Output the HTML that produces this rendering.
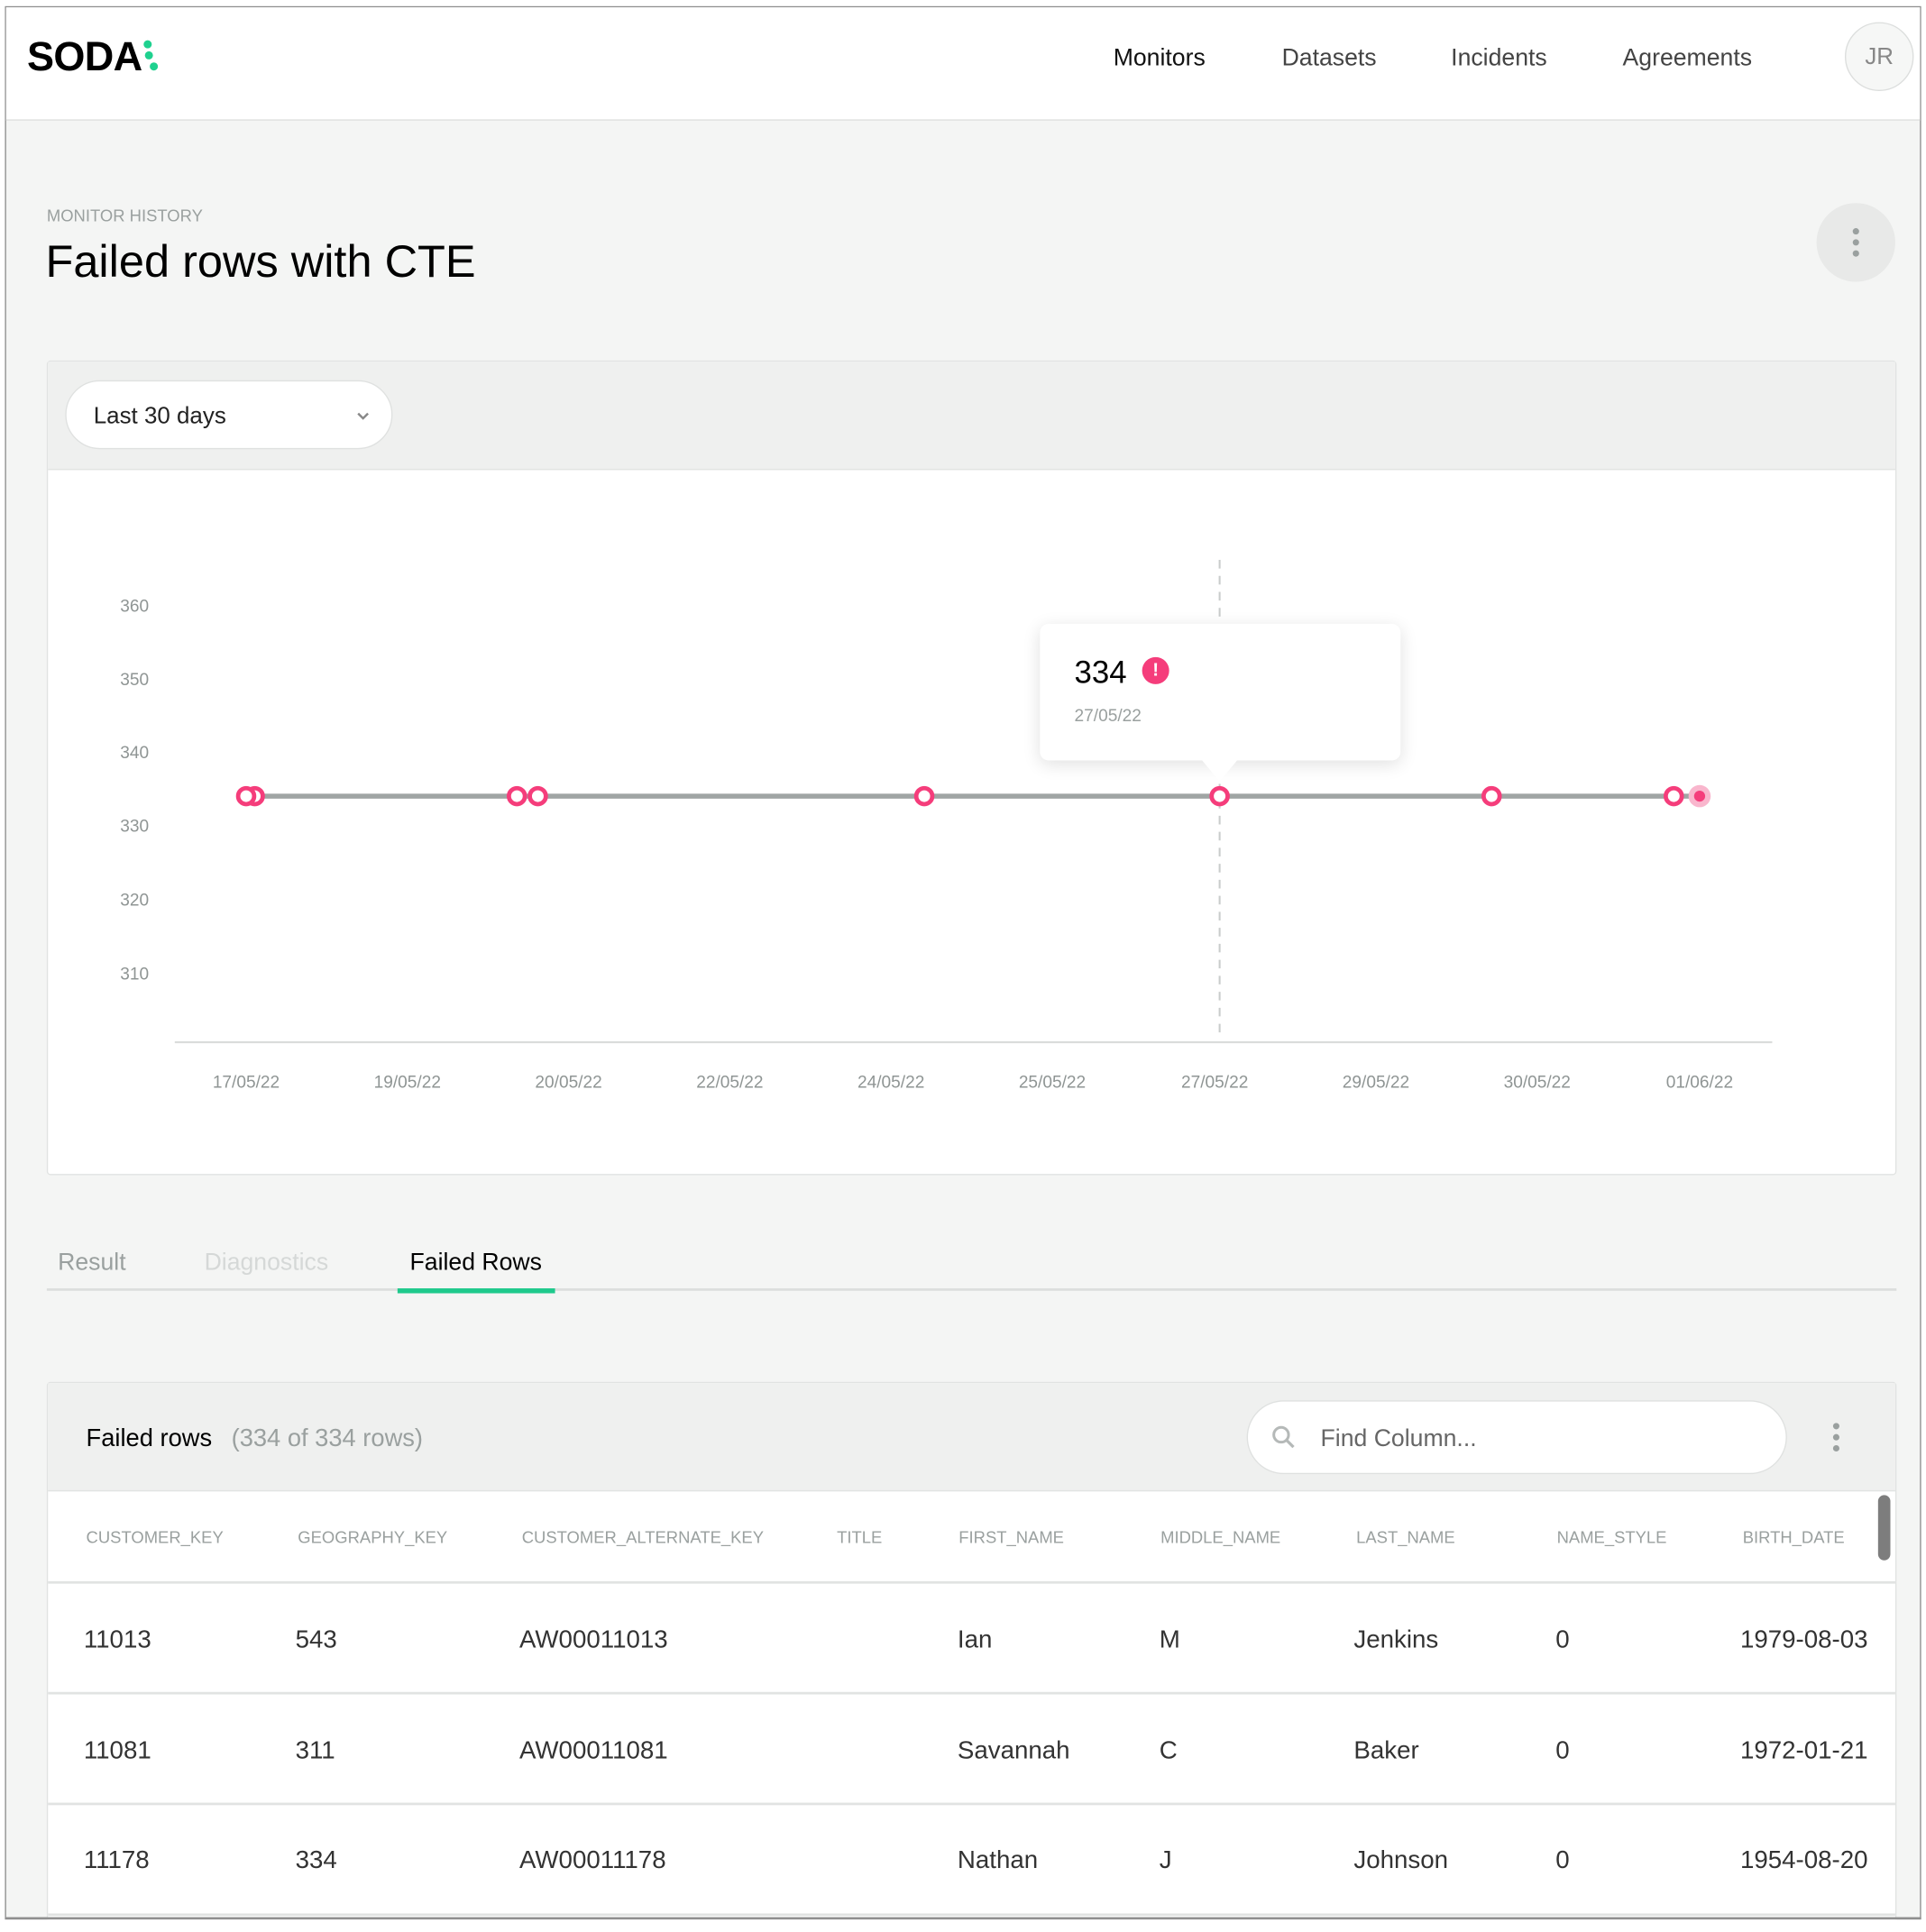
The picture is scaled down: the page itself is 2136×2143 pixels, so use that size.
<!DOCTYPE html>
<html><head><meta charset="utf-8"><style>
*{margin:0;padding:0;box-sizing:border-box}
html,body{width:2136px;height:2134px;overflow:hidden;background:#fff;font-family:"Liberation Sans",Arial,sans-serif}
#w{position:absolute;left:0;top:0;width:1565px;height:1564px;transform:scale(1.3649);transform-origin:0 0}
.a{position:absolute;white-space:nowrap}
.t{position:absolute;white-space:nowrap;line-height:20px;transform:translateY(calc(-50% + 2px))}
.c{transform:translate(-50%,calc(-50% + 2px))}
</style></head><body><div id="w">
<div class="a" style="left:4px;top:5px;width:1557px;height:1555px;border:1px solid #8f8f8f;background:#f4f5f4;overflow:hidden">
</div>
<!-- header -->
<div class="a" style="left:5px;top:6px;width:1555px;height:92px;background:#fff;border-bottom:1.5px solid #dcdedd"></div>
<div class="t" style="left:22px;top:44px;font-size:33px;font-weight:900;letter-spacing:-0.5px;line-height:34px;color:#000">SODA</div>
<svg class="a" style="left:112px;top:30px" width="22" height="30"><circle cx="8" cy="6" r="3.3" fill="#1fd18f"/><circle cx="9" cy="15" r="3.3" fill="#1fd18f"/><circle cx="13" cy="24" r="3.3" fill="#1fd18f"/></svg>
<div class="t c" style="left:942px;top:45px;font-size:19.5px;color:#111">Monitors</div>
<div class="t c" style="left:1080px;top:45px;font-size:19.5px;color:#444">Datasets</div>
<div class="t c" style="left:1218px;top:45px;font-size:19.5px;color:#444">Incidents</div>
<div class="t c" style="left:1371px;top:45px;font-size:19.5px;color:#444">Agreements</div>
<div class="a" style="left:1499px;top:18px;width:56px;height:56px;border-radius:50%;border:1.5px solid #dcdedd;background:#f6f7f6"></div>
<div class="t c" style="left:1527px;top:45px;font-size:19px;color:#888">JR</div>
<!-- title -->
<div class="t" style="left:38px;top:174px;font-size:13.5px;color:#9aa09f">MONITOR HISTORY</div>
<div class="t" style="left:37px;top:211px;font-size:37px;line-height:42px;color:#000;font-weight:500">Failed rows with CTE</div>
<div class="a" style="left:1476px;top:165px;width:64px;height:64px;border-radius:50%;background:#e8e9e8"></div>
<svg class="a" style="left:1504px;top:184px" width="8" height="26"><circle cx="4" cy="4" r="2.6" fill="#9aa09f"/><circle cx="4" cy="13" r="2.6" fill="#9aa09f"/><circle cx="4" cy="22" r="2.6" fill="#9aa09f"/></svg>
<!-- chart card -->
<div class="a" style="left:38px;top:293px;width:1503px;height:662px;border:1px solid #e1e3e2;background:#fff;border-radius:3px"></div>
<div class="a" style="left:39px;top:294px;width:1501px;height:88px;background:#eff0ef;border-bottom:1px solid #e1e3e2"></div>
<div class="a" style="left:53px;top:309px;width:266px;height:56px;border-radius:28px;background:#fff;border:1.5px solid #dfe1e0"></div>
<div class="t" style="left:76px;top:337px;font-size:19px;color:#222">Last 30 days</div>
<svg class="a" style="left:289px;top:334px" width="12" height="8"><path d="M2 2l4 4 4-4" stroke="#888" stroke-width="1.8" fill="none"/></svg>
<svg class="a" style="left:0;top:0" width="1565" height="960">
<g font-family="Liberation Sans,Arial,sans-serif" font-size="14" fill="#8f9594" text-anchor="end">
<text x="121" y="497">360</text><text x="121" y="557">350</text><text x="121" y="616">340</text><text x="121" y="676">330</text><text x="121" y="736">320</text><text x="121" y="796">310</text>
</g>
<line x1="142" y1="847" x2="1440" y2="847" stroke="#dadcdb" stroke-width="1.5"/>
<g font-family="Liberation Sans,Arial,sans-serif" font-size="14" fill="#8f9594" text-anchor="middle">
<text x="200" y="884">17/05/22</text><text x="331" y="884">19/05/22</text><text x="462" y="884">20/05/22</text><text x="593" y="884">22/05/22</text><text x="724" y="884">24/05/22</text><text x="855" y="884">25/05/22</text><text x="987" y="884">27/05/22</text><text x="1118" y="884">29/05/22</text><text x="1249" y="884">30/05/22</text><text x="1381" y="884">01/06/22</text>
</g>
<line x1="991" y1="455" x2="991" y2="842" stroke="#c9cccb" stroke-width="1.5" stroke-dasharray="7 6"/>
<line x1="200" y1="647" x2="1380" y2="647" stroke="#a0a5a4" stroke-width="4"/>
<g fill="#fff" stroke="#f53d7b" stroke-width="3.5">
<circle cx="207" cy="647" r="6.5"/><circle cx="200" cy="647" r="6.5"/><circle cx="420" cy="647" r="6.5"/><circle cx="437" cy="647" r="6.5"/><circle cx="751" cy="647" r="6.5"/><circle cx="991" cy="647" r="6.5"/><circle cx="1212" cy="647" r="6.5"/><circle cx="1360" cy="647" r="6.5"/>
</g>
<circle cx="1381" cy="647" r="9" fill="#f9b6cd"/><circle cx="1381" cy="647" r="4.5" fill="#f53d7b"/>
</svg>
<!-- tooltip -->
<div class="a" style="left:845px;top:507px;width:293px;height:111px;background:#fff;border-radius:7px;box-shadow:0 3px 14px rgba(0,0,0,.12)"></div>
<svg class="a" style="left:976px;top:617px" width="30" height="20"><path d="M0 0L15 18L30 0Z" fill="#fff"/></svg>
<div class="t" style="left:873px;top:545px;font-size:25.5px;line-height:28px;color:#000">334</div>
<div class="a" style="left:928px;top:534px;width:22px;height:22px;border-radius:50%;background:#f53d7b;color:#fff;font-size:15px;font-weight:bold;text-align:center;line-height:22px">!</div>
<div class="t" style="left:873px;top:579px;font-size:14px;color:#9aa09f">27/05/22</div>
<!-- tabs -->
<div class="a" style="left:38px;top:1047px;width:1503px;height:1.5px;background:#dcdedd"></div>
<div class="t" style="left:47px;top:1024px;font-size:19.5px;color:#9aa09f">Result</div>
<div class="t" style="left:166px;top:1024px;font-size:19.5px;color:#d5d8d7">Diagnostics</div>
<div class="t" style="left:333px;top:1024px;font-size:19.5px;color:#000;font-weight:500">Failed Rows</div>
<div class="a" style="left:323px;top:1047px;width:128px;height:3.5px;background:#1ec98c"></div>
<!-- table card -->
<div class="a" style="left:38px;top:1123px;width:1503px;height:440px;border:1px solid #e1e3e2;background:#fff;border-radius:3px"></div>
<div class="a" style="left:39px;top:1124px;width:1501px;height:88px;background:#eff0ef;border-bottom:1.5px solid #e1e3e2"></div>
<div class="t" style="left:70px;top:1167px;font-size:20px;color:#000;font-weight:500">Failed rows</div>
<div class="t" style="left:188px;top:1167px;font-size:20px;color:#9aa09f">(334 of 334 rows)</div>
<div class="a" style="left:1013px;top:1138px;width:439px;height:60px;border-radius:30px;background:#fff;border:1.5px solid #dfe1e0"></div>
<svg class="a" style="left:1033px;top:1158px" width="22" height="22"><circle cx="8" cy="8" r="6" stroke="#b5b9b8" stroke-width="2.2" fill="none"/><path d="M12.5 12.5L18 18" stroke="#b5b9b8" stroke-width="2.4"/></svg>
<div class="t" style="left:1073px;top:1167px;font-size:19.5px;color:#666">Find Column...</div>
<svg class="a" style="left:1488px;top:1154px" width="8" height="28"><circle cx="4" cy="5" r="2.6" fill="#9aa09f"/><circle cx="4" cy="14" r="2.6" fill="#9aa09f"/><circle cx="4" cy="23" r="2.6" fill="#9aa09f"/></svg>
<div class="a" style="left:39px;top:1285px;width:1501px;height:1.5px;background:#e1e3e2"></div>
<div class="a" style="left:39px;top:1375px;width:1501px;height:1.5px;background:#e1e3e2"></div>
<div class="a" style="left:39px;top:1465px;width:1501px;height:1.5px;background:#e1e3e2"></div>
<div class="a" style="left:39px;top:1555px;width:1501px;height:1.5px;background:#e1e3e2"></div>
<div class="a" style="left:1526px;top:1215px;width:10px;height:53px;border-radius:5px;background:#7d7d7d"></div>
<div style="font-size:13.5px;color:#9aa09f">
<div class="t" style="left:70px;top:1248px">CUSTOMER_KEY</div>
<div class="t" style="left:242px;top:1248px">GEOGRAPHY_KEY</div>
<div class="t" style="left:424px;top:1248px">CUSTOMER_ALTERNATE_KEY</div>
<div class="t" style="left:680px;top:1248px">TITLE</div>
<div class="t" style="left:779px;top:1248px">FIRST_NAME</div>
<div class="t" style="left:943px;top:1248px">MIDDLE_NAME</div>
<div class="t" style="left:1102px;top:1248px">LAST_NAME</div>
<div class="t" style="left:1265px;top:1248px">NAME_STYLE</div>
<div class="t" style="left:1416px;top:1248px">BIRTH_DATE</div>
</div>
<div style="font-size:20.3px;color:#333">
<div class="t" style="left:68px;top:1331px">11013</div><div class="t" style="left:240px;top:1331px">543</div><div class="t" style="left:422px;top:1331px">AW00011013</div><div class="t" style="left:778px;top:1331px">Ian</div><div class="t" style="left:942px;top:1331px">M</div><div class="t" style="left:1100px;top:1331px">Jenkins</div><div class="t" style="left:1264px;top:1331px">0</div><div class="t" style="left:1414px;top:1331px">1979-08-03</div>
<div class="t" style="left:68px;top:1421px">11081</div><div class="t" style="left:240px;top:1421px">311</div><div class="t" style="left:422px;top:1421px">AW00011081</div><div class="t" style="left:778px;top:1421px">Savannah</div><div class="t" style="left:942px;top:1421px">C</div><div class="t" style="left:1100px;top:1421px">Baker</div><div class="t" style="left:1264px;top:1421px">0</div><div class="t" style="left:1414px;top:1421px">1972-01-21</div>
<div class="t" style="left:68px;top:1510px">11178</div><div class="t" style="left:240px;top:1510px">334</div><div class="t" style="left:422px;top:1510px">AW00011178</div><div class="t" style="left:778px;top:1510px">Nathan</div><div class="t" style="left:942px;top:1510px">J</div><div class="t" style="left:1100px;top:1510px">Johnson</div><div class="t" style="left:1264px;top:1510px">0</div><div class="t" style="left:1414px;top:1510px">1954-08-20</div>
</div>
<div class="a" style="left:4px;top:1558px;width:1557px;height:1.5px;background:#8f8f8f"></div>
<div class="a" style="left:0;top:1560px;width:1565px;height:10px;background:#fff"></div>
</div></body></html>
